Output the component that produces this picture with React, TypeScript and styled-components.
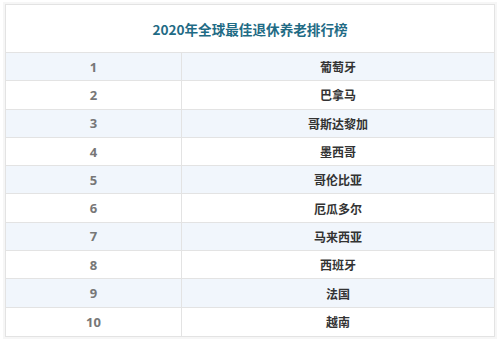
import React from 'react';
import styled, { createGlobalStyle } from 'styled-components';

const GlobalStyle = createGlobalStyle`
  html, body {
    margin: 0;
    padding: 0;
    background: #ffffff;
    font-family: "Noto Sans CJK SC", "Open Sans", sans-serif;
  }
`;

const Page = styled.div`
  width: 500px;
  height: 339px;
  padding: 4px 5px 0 5px;
  box-sizing: border-box;
`;

const Table = styled.div`
  display: grid;
  grid-template-columns: 176px 1fr;
  grid-template-rows: 48px repeat(10, 28.3px);
  width: 490px;
  border: 1px solid #e3e3e3;
  box-sizing: border-box;
  box-shadow: 0 0 0 2px #f6f6f6;
`;

const Title = styled.div`
  grid-column: 1 / 3;
  display: flex;
  align-items: center;
  justify-content: center;
  background: #ffffff;
  color: #1f6b85;
  font-size: 13.6px;
  font-weight: 700;
  border-bottom: 1px solid #e3e3e3;
`;

const Cell = styled.div<{ $shaded: boolean; $last: boolean }>`
  display: flex;
  align-items: center;
  justify-content: center;
  background: ${(p) => (p.$shaded ? '#f1f6fc' : '#ffffff')};
  border-bottom: ${(p) => (p.$last ? 'none' : '1px solid #e3e3e3')};
  box-sizing: border-box;
`;

const RankCell = styled(Cell)`
  border-right: 1px solid #e3e3e3;
  color: #777777;
  font-family: "Open Sans", sans-serif;
  font-size: 13px;
  font-weight: 700;
`;

const NameCell = styled(Cell)`
  color: #333333;
  font-size: 12px;
  font-weight: 700;
`;

const countries = [
  '葡萄牙',
  '巴拿马',
  '哥斯达黎加',
  '墨西哥',
  '哥伦比亚',
  '厄瓜多尔',
  '马来西亚',
  '西班牙',
  '法国',
  '越南',
];

export default function App() {
  return (
    <>
      <GlobalStyle />
      <Page>
        <Table>
          <Title>2020年全球最佳退休养老排行榜</Title>
          {countries.map((name, i) => (
            <React.Fragment key={name}>
              <RankCell $shaded={i % 2 === 0} $last={i === countries.length - 1}>
                {i + 1}
              </RankCell>
              <NameCell $shaded={i % 2 === 0} $last={i === countries.length - 1}>
                {name}
              </NameCell>
            </React.Fragment>
          ))}
        </Table>
      </Page>
    </>
  );
}
